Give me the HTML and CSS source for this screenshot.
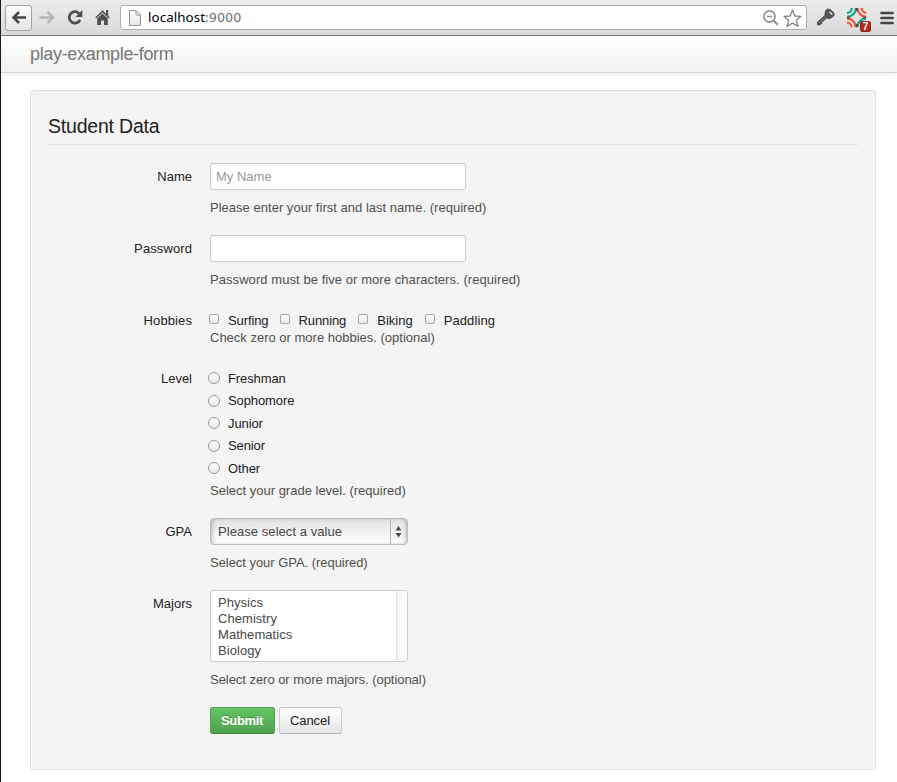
FILE: index.html
```
<!DOCTYPE html>
<html lang="en">
<head>
<meta charset="utf-8">
<title>play-example-form</title>
<link rel="stylesheet" href="styles.css">
</head>
<body>
<div class="window">
  <header class="toolbar">
    <span class="back"><svg width="18" height="16" viewBox="0 0 18 16"><path d="M16 7.500H3.500M9 2L3.500 7.500 9 13" fill="none" stroke="#484848" stroke-width="2.600"/></svg></span>
    <svg class="forward" width="18" height="16" viewBox="0 0 18 16"><path d="M1.500 7.500H15M9.500 2L15 7.500 9.500 13" fill="none" stroke="#b4b4b4" stroke-width="2.400"/></svg>
    <svg class="reload" width="16" height="16" viewBox="0 0 16 16"><path d="M12 4.400A5.700 5.700 0 1 0 13 11" fill="none" stroke="#505050" stroke-width="2.800"/><path d="M15.300 1v7H8.500z" fill="#505050"/></svg>
    <svg class="home" width="16" height="16" viewBox="0 0 16 16"><path d="M7.500 1.300L11 4.700V1h2.200v5.900L14.800 8.600l-1 1L7.500 3.600 1.200 9.600l-1-1zM7.500 4.500l5.300 5V16H9v-4.500H6V16H2.200V9.500z" fill="#505050"/></svg>
    <div class="omnibox">
      <svg class="page" width="12" height="16" viewBox="0 0 12 16"><defs><linearGradient id="pg" x2="0" y2="1"><stop stop-color="#fff"/><stop offset="1" stop-color="#e8e8e8"/></linearGradient></defs><path d="M.5 .5h6.500l4.500 4.500v10.500H.5zM7 .5V5h4.500" fill="url(#pg)" stroke="#929292"/></svg>
      <span class="url"><span class="host">localhost</span><span class="port">:9000</span></span>
      <svg class="lens" width="17" height="17" viewBox="0 0 17 17" fill="none" stroke="#929292"><circle cx="6.500" cy="6.500" r="5.600" stroke-width="1.700"/><path d="M3.800 6.500h5.400" stroke-width="1.500"/><path d="M10.700 10.700l4 4" stroke-width="2.200"/></svg>
      <svg class="star" width="20" height="19" viewBox="0 0 20 19"><path d="M9.500 1l2.300 6 6.100.3-4.600 4.200 1.700 6L9.500 14.100 4 17.500l1.700-6L1.100 7.300 7.200 7z" fill="#fff" stroke="#858585" stroke-width="1.300" stroke-linejoin="round"/></svg>
    </div>
    <svg class="key" width="18" height="18" viewBox="0 0 18 18"><path d="M8.500 2.800L10.500 1l2.800.5L17 5v2.700l-3.500 2.600-3 .2-1-.5-5 4.800v1.300H3V17H.6v-3L7.800 7.500z" fill="#555" stroke="#3a3a3a" stroke-width=".7" stroke-linejoin="round"/><path d="M12.800 4.200l2 1.900" stroke="#ddd" stroke-width="1.500" stroke-linecap="round"/><path d="M2 14.800l6.500-6" stroke="#858585"/></svg>
    <div class="extension">
      <svg width="20" height="20" viewBox="0 0 20 20" fill="none" stroke-width="2.300"><g stroke="#12a88c"><path d="M9 0A9 9 0 0 1 0 8.800M4.800 0A4.800 4.800 0 0 1 0 4.800"/><path d="M10.500 19.200a8.700 8.700 0 0 1 8.700-8.700M14.700 19.200a4.500 4.500 0 0 1 4.500-4.500"/></g><g stroke="#ec5a42"><path d="M10.500 0a9 9 0 0 0 8.700 8.800M14.700 0a4.800 4.800 0 0 0 4.500 4.800M0 10.500a8.700 8.700 0 0 1 8.700 8.700M0 14.700a4.500 4.500 0 0 1 4.500 4.500"/></g><path d="M9.700 0v3M9.700 16v3M0 9.700h3M16 9.700h3" stroke="#65432f" stroke-width="1.800"/></svg>
      <span class="badge">7</span>
    </div>
    <svg class="menu" width="14" height="14" viewBox="0 0 14 14"><path d="M1.500 2h11M1.500 7h11M1.500 12h11" stroke="#444" stroke-width="2.700" stroke-linecap="round"/></svg>
  </header>
  <nav class="navbar"><span class="brand">play-example-form</span></nav>
  <main>
    <form class="well">
      <h1>Student Data</h1>
      <div class="group">
        <span class="label">Name</span>
        <div class="controls"><div class="input"><span class="placeholder">My Name</span></div><p class="help name-help">Please enter your first and last name. (required)</p></div>
      </div>
      <div class="group">
        <span class="label password-label">Password</span>
        <div class="controls"><div class="input"></div><p class="help password-help">Password must be five or more characters. (required)</p></div>
      </div>
      <div class="group hobbies">
        <span class="label">Hobbies</span>
        <div class="controls">
          <div class="checks"><label><i class="box"></i>Surfing</label><label><i class="box"></i>Running</label><label><i class="box"></i>Biking</label><label><i class="box"></i>Paddling</label></div>
          <p class="help">Check zero or more hobbies. (optional)</p>
        </div>
      </div>
      <div class="group level">
        <span class="label">Level</span>
        <div class="controls">
          <div class="radios"><label><i class="dot"></i>Freshman</label><label><i class="dot"></i>Sophomore</label><label><i class="dot"></i>Junior</label><label><i class="dot"></i>Senior</label><label><i class="dot"></i>Other</label></div>
          <p class="help">Select your grade level. (required)</p>
        </div>
      </div>
      <div class="group gpa">
        <span class="label">GPA</span>
        <div class="controls"><div class="select"><span>Please select a value</span><svg class="arrows" width="17" height="25" viewBox="0 0 17 25"><path d="M.5 0v25" stroke="#b4b4b4"/><path d="M8.500 7l3 4.500h-6zM8.500 18.500l3-4.500h-6z" fill="#484848"/></svg></div><p class="help">Select your GPA. (required)</p></div>
      </div>
      <div class="group majors">
        <span class="label">Majors</span>
        <div class="controls"><div class="list"><ul><li>Physics</li><li>Chemistry</li><li>Mathematics</li><li>Biology</li></ul><div class="track"></div></div><p class="help">Select zero or more majors. (optional)</p></div>
      </div>
      <div class="actions"><button type="button" class="btn submit">Submit</button><button type="button" class="btn">Cancel</button></div>
    </form>
  </main>
</div>
</body>
</html>
```
FILE: styles.css
```
* { box-sizing: border-box; }
body { margin: 0; background: #fff; font: 13px/18px "Liberation Sans", Arial, sans-serif; color: #222; overflow: hidden; }
svg { display: block; flex: none; }
.window { height: 782px; border-left: 1px solid #1c1c1c; }

.toolbar { height: 36px; display: flex; align-items: flex-start; background: linear-gradient(#ececec, #dadada); border-bottom: 1px solid #777; padding: 5px 0 0 4px; }
.back { width: 27px; height: 26px; border: 1px solid #a3a3a3; border-radius: 3px; background: linear-gradient(#fbfbfb, #e6e6e6); padding: 4px 0 0 4px; flex: none; }
.forward { margin: 5px 0 0 6px; }
.reload { margin: 4px 0 0 11px; }
.home { margin: 4px 0 0 12px; }
.omnibox { flex: none; width: 687px; height: 25px; margin-left: 9px; display: flex; background: #fff; border: 1px solid #adadad; border-radius: 3px; }
.page { margin: 4px 0 0 8px; }
.url { flex: 1; margin-left: 7px; font: 13.400px/23px "Noto Sans", sans-serif; }
.host { color: #000; letter-spacing: .05px; }
.port { color: #666; letter-spacing: .45px; }
.lens { margin: 4px 0 0; }
.star { margin: 3px 3px 0 3px; }
.key { margin: 3px 0 0 10px; }
.extension { position: relative; width: 24px; margin-left: 12px; padding-top: 3px; }
.badge { position: absolute; left: 13px; top: 16px; width: 11px; height: 11px; border-radius: 2px; background: #b32a20; border: 1px solid #94241c; color: #fff; font: bold 10px/10px "Liberation Sans", sans-serif; text-align: center; }
.menu { margin: 6px 0 0 9px; }

.navbar { height: 37px; padding-left: 29px; background: linear-gradient(#fff, #f2f2f2); border-bottom: 1px solid #d4d4d4; box-shadow: 0 1px 7px rgba(0,0,0,.07); }
.brand { font-size: 18px; line-height: 36px; color: #777; letter-spacing: -.33px; }

main { padding: 17px 21px 0 29px; }
.well { height: 680px; padding: 17px; background: #f4f4f4; border: 1px solid #e1e1e1; border-radius: 3px; box-shadow: inset 0 1px 1px rgba(0,0,0,.02); }
h1 { margin: 0 0 18px; height: 37px; font-size: 19.500px; font-weight: normal; line-height: 36px; letter-spacing: -.2px; border-bottom: 1px solid #e2e2e2; }
.group { display: flex; gap: 18px; height: 72px; }
.group.hobbies { height: 58px; }
.group.level { height: 153px; }
.group.majors { height: 117px; }
.label { width: 144px; padding-top: 5px; text-align: right; }
.password-label { letter-spacing: .1px; }
.hobbies .label { letter-spacing: .1px; }
.input { display: flex; align-items: center; width: 256px; height: 27px; padding-left: 5px; background: #fff; border: 1px solid #ccc; border-radius: 3px; box-shadow: inset 0 1px 1px rgba(0,0,0,.05); }
.placeholder { color: #999; }
.help { margin: 9px 0 0; line-height: 18px; color: #505050; white-space: nowrap; }
.name-help { letter-spacing: .02px; }
.password-help { letter-spacing: .065px; }
.checks { display: flex; padding-top: 5px; height: 22px; }
.checks label { position: relative; padding-left: 18px; margin-right: 12px; line-height: 18px; }
.checks label:nth-child(-n+2) { letter-spacing: -.1px; }
.checks label:nth-child(2) { margin-right: 13px; }
.checks label:nth-child(3) { margin-right: 13px; }
.checks label:nth-child(4) { letter-spacing: .1px; }
.box { position: absolute; left: -1px; top: 2px; width: 10px; height: 10px; border: 1px solid #a6a6a6; border-radius: 2px; background: linear-gradient(#fff, #e9e9e9); }
.hobbies .help { margin: 0; }
.radios { padding-top: 2.500px; }
.radios label { position: relative; display: block; height: 22.500px; line-height: 22.500px; padding-left: 18px; letter-spacing: -.1px; }
.dot { position: absolute; left: -2px; top: 4.400px; width: 12px; height: 12px; border: 1px solid #999; border-radius: 50%; background: linear-gradient(#fff, #e8e8e8); }
.radios label:nth-child(even) .dot { top: 5px; }
.level .help { margin: 2px 0 0; }
.gpa .help, .majors .help { letter-spacing: -.04px; }
.select { display: flex; justify-content: space-between; width: 198px; height: 27px; padding-left: 7px; border: 1px solid #bbb; border-radius: 4px; background: linear-gradient(#e2e2e2, #fff); box-shadow: inset 3px 0 4px -2px rgba(0,0,0,.25), inset -3px 0 4px -2px rgba(0,0,0,.25); line-height: 25px; color: #484848; letter-spacing: .06px; }
.list { display: flex; width: 198px; height: 72px; background: #fff; border: 1px solid #ccc; border-radius: 3px; overflow: hidden; color: #484848; }
.list ul { flex: 1; list-style: none; margin: 0; padding: 4px 0 0 7px; line-height: 16px; letter-spacing: .05px; }
.track { width: 11px; border-left: 1px solid #e2e2e2; background: linear-gradient(90deg, #f3f3f3, #fff); }
.actions { display: flex; gap: 4px; padding-left: 162px; }
.btn { width: 63px; height: 27px; padding: 0 1px 0 0; font: inherit; color: #222; letter-spacing: -.1px; background: linear-gradient(#fff, #e6e6e6); border: 1px solid #ccc; border-bottom-color: #b3b3b3; border-radius: 3px; }
.submit { width: 65px; color: #fff; font-weight: bold; letter-spacing: -.35px; background: linear-gradient(#62c462, #51a351); border-color: #51a351; border-bottom-color: #408540; text-shadow: 0 -1px 0 rgba(0,0,0,.25); }
```
